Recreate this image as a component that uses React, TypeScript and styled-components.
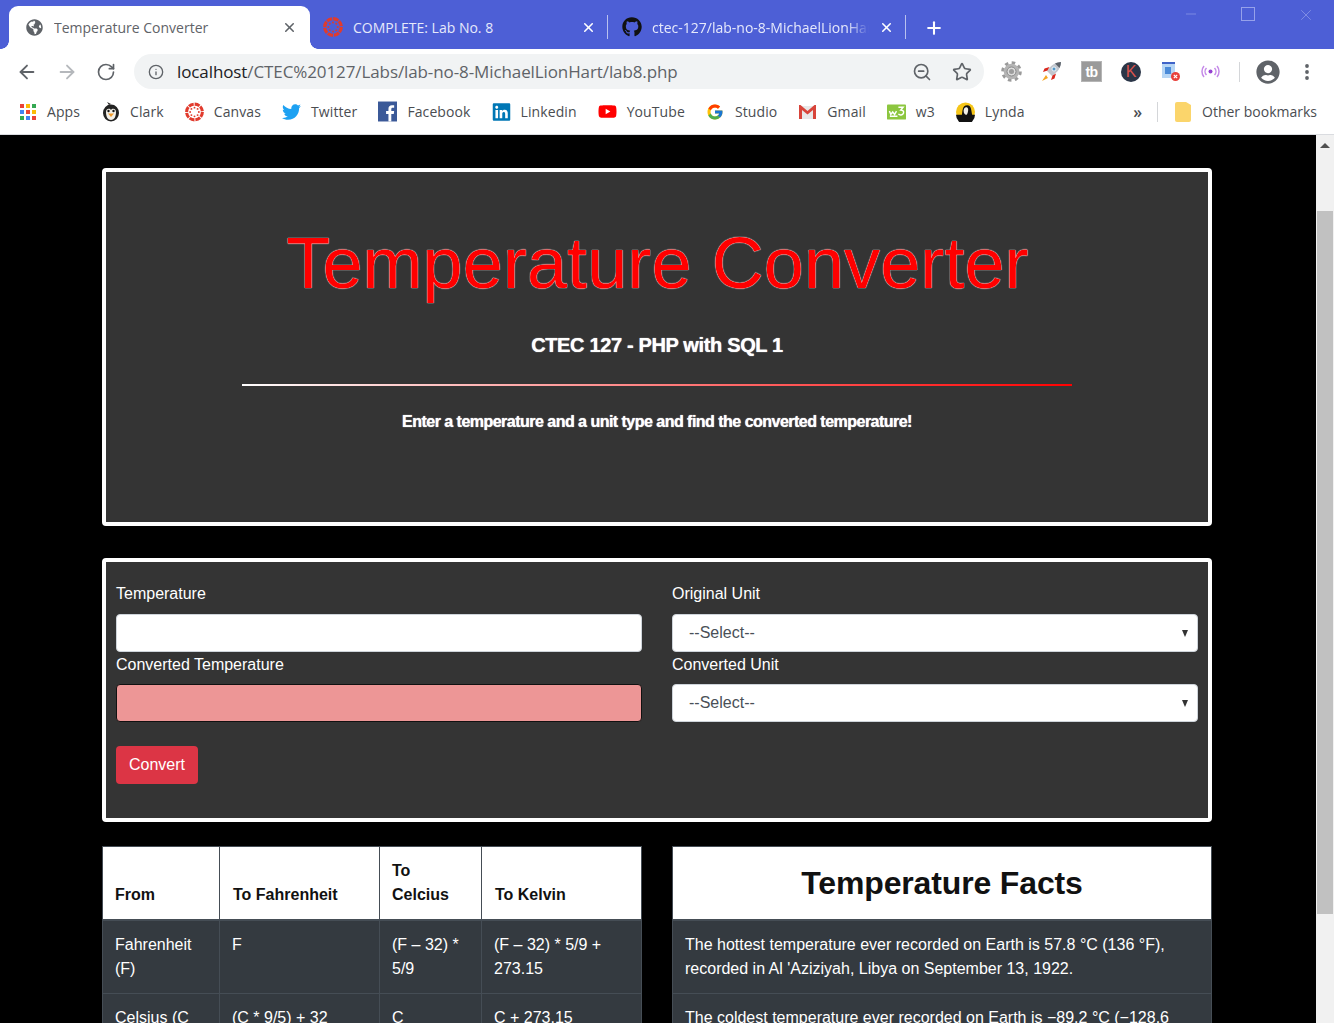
import styled, { createGlobalStyle } from "styled-components";
import { ArrowLeft, ArrowRight, RotateCw, Info, ZoomOut, Star, X, Plus, Minus } from "lucide-react";
import { FaGithub, FaGlobeAmericas, FaTwitter, FaLinkedin, FaYoutube, FaUserCircle } from "react-icons/fa";
import { FcGoogle } from "react-icons/fc";

const GlobalStyle = createGlobalStyle`
  html, body { margin: 0; padding: 0; background: #000; }
  * { box-sizing: border-box; }
  body { font-family: "Liberation Sans", Arial, sans-serif; overflow: hidden; }
`;

const Shell = styled.div`
  width: 1334px;
  height: 1023px;
  display: flex;
  flex-direction: column;
  overflow: hidden;
`;

const TabBar = styled.div`
  height: 49px;
  flex: none;
  background: #4d5fd6;
  display: flex;
  align-items: flex-end;
  padding-left: 9px;
  font-family: "Open Sans", sans-serif;
  font-size: 14px;
`;

const Tab = styled.div<{ $active?: boolean; $w: number; $sep?: boolean; $inset: number }>`
  width: ${(p) => p.$w}px;
  height: 43px;
  display: flex;
  align-items: center;
  padding: 0 ${(p) => (p.$active ? 13 : 12)}px 1px ${(p) => p.$inset}px;
  gap: 10px;
  border-radius: 9px 9px 0 0;
  background: ${(p) => (p.$active ? "#fff" : "transparent")};
  color: ${(p) => (p.$active ? "#5f6368" : "#e6e9fb")};
  position: relative;
  &::after {
    content: "";
    display: ${(p) => (p.$sep ? "block" : "none")};
    position: absolute;
    right: 0;
    top: 9px;
    height: 24px;
    width: 1px;
    background: #b9c1ef;
  }
`;

const TabFlare = styled.span<{ $side: "left" | "right" }>`
  position: absolute;
  bottom: 0;
  ${(p) => p.$side}: -8px;
  width: 8px;
  height: 8px;
  background: radial-gradient(
    circle at ${(p) => (p.$side === "left" ? "0 0" : "100% 0")},
    transparent 7.5px,
    #fff 8px
  );
`;

const TabTitle = styled.span<{ $fade?: boolean }>`
  flex: 1;
  white-space: nowrap;
  overflow: hidden;
  ${(p) => p.$fade && "mask-image: linear-gradient(90deg, #000 90%, transparent);"}
`;

const TabIcon = styled.span`
  width: 20px;
  height: 20px;
  flex: none;
  display: flex;
  align-items: center;
  justify-content: center;
`;

const NewTab = styled.div`
  margin-left: 18px;
  height: 43px;
  display: flex;
  align-items: center;
  color: #fff;
`;

const WindowControls = styled.div`
  margin-left: auto;
  align-self: flex-start;
  display: flex;
  color: #96a1ea;
  padding: 6px 19px 0 0;
  gap: 41px;
`;

const Toolbar = styled.div`
  height: 46px;
  flex: none;
  background: #fff;
  display: flex;
  align-items: center;
  padding: 0 16px 1px;
  color: #5f6368;
`;

const NavButtons = styled.div`
  display: flex;
  align-items: center;
  gap: 18px;
  width: 118px;
  flex: none;
`;

const Omnibox = styled.div`
  width: 850px;
  height: 35px;
  flex: none;
  border-radius: 18px;
  background: #f1f3f4;
  display: flex;
  align-items: center;
  padding: 0 12px 0 14px;
  font-family: "Open Sans", sans-serif;
  font-size: 17px;
  letter-spacing: -0.1px;
  color: #5f6368;
`;

const Url = styled.span`
  flex: 1;
  margin: 0 0 1px 13px;
  white-space: nowrap;
  & b {
    font-weight: 400;
    color: #202124;
  }
`;

const OmniActions = styled.div`
  display: flex;
  gap: 20px;
  align-items: center;
  color: #5f6368;
`;

const Extensions = styled.div`
  display: flex;
  align-items: center;
  margin-left: 17px;
  gap: 19px;
  flex: none;
`;

const ExtIcon = styled.span`
  width: 21px;
  height: 21px;
  display: flex;
  align-items: center;
  justify-content: center;
`;

const TbBadge = styled.span`
  width: 21px;
  height: 21px;
  background: #9a9a9a;
  border: 1px solid #b5b5b5;
  color: #fff;
  font-size: 14px;
  font-weight: 700;
  letter-spacing: -0.5px;
  display: flex;
  align-items: center;
  justify-content: center;
`;

const KBadge = styled.span`
  width: 20px;
  height: 20px;
  border-radius: 50%;
  background: #2a3547;
  color: #d9534c;
  font-size: 16px;
  display: flex;
  align-items: center;
  justify-content: center;
`;

const VSep = styled.span`
  width: 1px;
  height: 20px;
  background: #d4d6d9;
  flex: none;
`;

const ProfileGroup = styled.div`
  display: flex;
  align-items: center;
  gap: 16px;
  margin-left: -1px;
`;

const MenuDots = styled.svg`
  margin-left: 9px;
`;

const Bookmarks = styled.div`
  height: 40px;
  flex: none;
  background: #fff;
  border-bottom: 1px solid #dadce0;
  display: flex;
  align-items: center;
  padding: 0 17px 6px 18px;
  gap: 21px;
  font-family: "Open Sans", sans-serif;
  font-size: 14px;
  letter-spacing: 0.1px;
  color: #4a4d51;
`;

const Bookmark = styled.span`
  display: flex;
  align-items: center;
  gap: 10px;
  white-space: nowrap;
`;

const BmIcon = styled.span`
  width: 19px;
  height: 20px;
  display: flex;
  align-items: center;
  justify-content: center;
  flex: none;
`;

const BmEnd = styled.div`
  margin-left: auto;
  display: flex;
  align-items: center;
  gap: 15px;
  letter-spacing: 0;
`;

const Overflow = styled.span`
  font-size: 16px;
  font-weight: 600;
`;

const Viewport = styled.div`
  flex: 1;
  display: flex;
  min-height: 0;
`;

const Page = styled.main`
  flex: 1;
  background: #000;
  padding: 33px 104px 0 102px;
  overflow: hidden;
`;

const Scrollbar = styled.div`
  width: 18px;
  flex: none;
  background: #f1f1f1;
  display: flex;
  flex-direction: column;
  align-items: center;
`;

const ScrollArrow = styled.span`
  width: 0;
  height: 0;
  margin-top: 8px;
  border-left: 5px solid transparent;
  border-right: 5px solid transparent;
  border-bottom: 5px solid #505050;
`;

const ScrollThumb = styled.div`
  width: 16px;
  height: 703px;
  margin-top: 63px;
  background: #c1c1c1;
`;

const Panel = styled.section`
  background: #343434;
  border: 4px solid #fff;
  border-radius: 4px;
`;

const Hero = styled(Panel)`
  height: 358px;
  padding-top: 48px;
  text-align: center;
  color: #fff;
`;

const Title = styled.h1`
  margin: 0;
  padding-left: 1px;
  font-size: 72px;
  line-height: 86px;
  font-weight: 400;
  letter-spacing: 0.1px;
  color: #f00;
  text-shadow: 0 0 1px #fff, 0 0 1px #fff;
`;

const Subtitle = styled.h2`
  margin: 26px 0 0;
  font-size: 20px;
  line-height: 26px;
  font-weight: 700;
  letter-spacing: -0.35px;
  text-shadow: 0 0 1px #fff;
`;

const Rule = styled.hr`
  width: 830px;
  height: 2px;
  margin: 26px auto 0;
  border: 0;
  background: linear-gradient(90deg, #fff, #f00);
`;

const Lead = styled.p`
  margin: 25px 0 0;
  font-size: 16px;
  line-height: 22px;
  font-weight: 700;
  letter-spacing: -0.52px;
  text-shadow: 0 0 1px #fff;
`;

const FormPanel = styled(Panel)`
  margin-top: 32px;
  height: 264px;
  padding: 20px 10px 0;
  color: #fff;
`;

const FormGrid = styled.div`
  display: grid;
  grid-template-columns: 526px 526px;
  column-gap: 30px;
`;

const Field = styled.div`
  display: flex;
  flex-direction: column;
`;

const Label = styled.label<{ $lower?: boolean }>`
  font-size: 16px;
  line-height: 24px;
  padding-top: ${(p) => (p.$lower ? 1 : 0)}px;
  margin-bottom: ${(p) => (p.$lower ? 7 : 8)}px;
`;

const TextInput = styled.input<{ $result?: boolean }>`
  height: 38px;
  width: 100%;
  border-radius: 4px;
  border: 1px solid ${(p) => (p.$result ? "#111" : "#ced4da")};
  background: ${(p) => (p.$result ? "#ed9696" : "#fff")};
  display: block;
`;

const SelectWrap = styled.div`
  position: relative;
  height: 38px;
  &::after {
    content: "";
    position: absolute;
    right: 10px;
    top: 16px;
    border-left: 3.5px solid transparent;
    border-right: 3.5px solid transparent;
    border-top: 7px solid #333;
  }
`;

const Select = styled.select`
  appearance: none;
  width: 100%;
  height: 38px;
  border-radius: 4px;
  border: 1px solid #ced4da;
  background: #fff;
  color: #495057;
  font-family: inherit;
  font-size: 16px;
  padding: 0 16px 2px;
`;

const ConvertButton = styled.button`
  display: block;
  margin-top: 24px;
  width: 82px;
  height: 38px;
  border: 0;
  border-radius: 4px;
  background: #dc3545;
  color: #fff;
  font-family: inherit;
  font-size: 16px;
`;

const LowerGrid = styled.div`
  margin-top: 24px;
  display: grid;
  grid-template-columns: 539px 540px;
  column-gap: 31px;
  align-items: start;
`;

const Table = styled.table`
  width: 100%;
  table-layout: fixed;
  border-collapse: collapse;
  font-size: 16px;
  line-height: 24px;
  color: #fff;
  background: #343a40;
  & th, & td {
    border: 1px solid #454d55;
    padding: 12px;
    text-align: left;
  }
  & thead th {
    background: #fff;
    color: #111;
    vertical-align: bottom;
    border-bottom-width: 2px;
    font-weight: 700;
  }
  & thead th:nth-child(2), & thead th:nth-child(4) {
    padding-left: 13px;
  }
  & td {
    vertical-align: top;
    white-space: pre-line;
  }
`;

const FactHead = styled.th`
  font-size: 32px;
  line-height: 38px;
  height: 73px;
  letter-spacing: -0.15px;
  && {
    text-align: center;
    vertical-align: middle;
    padding-top: 12px;
  }
`;

function CanvasIcon({ size = 20 }: { size?: number }) {
  const spokes = Array.from({ length: 8 }, (_, i) => (i * Math.PI) / 4);
  return (
    <svg width={size} height={size} viewBox="0 0 20 20" fill="#e13b2d">
      <circle cx="10" cy="10" r="8.3" fill="none" stroke="#e13b2d" strokeWidth="3.2" strokeDasharray="5.500 1" />
      {spokes.map((a) => (
        <circle key={a} cx={10 + 4.6 * Math.cos(a)} cy={10 + 4.6 * Math.sin(a)} r="1" />
      ))}
    </svg>
  );
}

function AppsIcon() {
  const colors = ["#ea4335", "#fbbc05", "#34a853", "#4285f4", "#ea4335", "#fbbc05", "#34a853", "#4285f4", "#ea4335"];
  return (
    <svg width="18" height="18" viewBox="0 0 18 18">
      {colors.map((c, i) => (
        <rect key={i} x={1 + (i % 3) * 6} y={1 + Math.floor(i / 3) * 6} width="4" height="4" fill={c} />
      ))}
    </svg>
  );
}

function PenguinIcon() {
  return (
    <svg width="18" height="20" viewBox="0 0 18 20">
      <path d="M7 3L5 0l4 2z" fill="#222" />
      <ellipse cx="9" cy="11" rx="8" ry="8.500" fill="#222" />
      <path d="M9 8c-1-2-5-2-5 2 0 5 2 8 5 8s5-3 5-8c0-4-4-4-5-2z" fill="#f3f0e8" />
      <circle cx="6.500" cy="9" r="1.200" fill="#111" />
      <circle cx="11.500" cy="9" r="1.200" fill="#111" />
      <path d="M6 11.500h6l-3 3.500z" fill="#f09a2a" />
    </svg>
  );
}

function GearIcon() {
  return (
    <svg width="21" height="21" viewBox="0 0 21 21">
      <circle cx="10.500" cy="10.500" r="8.800" fill="none" stroke="#9a9a9a" strokeWidth="3" strokeDasharray="3.500 3.400" />
      <circle cx="10.500" cy="10.500" r="7.800" fill="#b4b4b4" />
      <circle cx="10.500" cy="10.500" r="4.500" fill="#dcdcdc" stroke="#8a8a8a" />
      <circle cx="10.500" cy="10.500" r="2.500" fill="#9c9c9c" />
    </svg>
  );
}

function RocketIcon() {
  return (
    <svg width="21" height="21" viewBox="0 0 21 21">
      <path d="M5 14l-4 6 6-3z" fill="#f5a623" />
      <path d="M20 1c-5 0-10 3-14 9l5 5c6-4 9-9 9-14z" fill="#c2c6cd" />
      <path d="M20 1c-2 0-4 .5-6 1.500L18.500 7C19.500 5 20 3 20 1z" fill="#5d636b" />
      <circle cx="13" cy="8" r="2" fill="#4f96c8" stroke="#fff" strokeWidth="0.8" />
      <path d="M6.500 9.500L2 11l1.500-3.500 5-1.500zM11.500 14.500L10 19l3.500-1.500 1.500-5z" fill="#d9281e" />
    </svg>
  );
}

function FacebookIcon() {
  return (
    <svg width="20" height="21" viewBox="0 0 20 21">
      <rect width="20" height="21" fill="#3b5998" />
      <path d="M14 21v-8h2.600l.4-3h-3V8c0-.9.300-1.500 1.500-1.500H17V4c-.5 0-1.300-.1-2.300-.1C12.400 3.900 11 5.200 11 7.700V10H8.500v3H11v8z" fill="#fff" />
    </svg>
  );
}

function GmailIcon() {
  return (
    <svg width="19" height="16" viewBox="0 0 19 16">
      <path d="M1 2h17v13H1z" fill="#e8e8e8" />
      <path d="M1 1h1.500l7 6 7-6H18v14h-3V6l-5.500 4.500L4 6v9H1z" fill="#d8443a" />
    </svg>
  );
}

function W3Icon() {
  return (
    <svg width="20" height="16" viewBox="0 0 20 16">
      <rect width="20" height="16" rx="1" fill="#8cc63f" />
      <path d="M2.500 7l1.500 3.500L6 8l2 2.500L10 7M12 3h5l-2.500 3c2.500 0 3.500 1.500 2.800 3.300-.8 2-3.800 2.500-5.300.7M3 12.500h8" fill="none" stroke="#fff" strokeWidth="1.500" />
    </svg>
  );
}

function LyndaIcon() {
  return (
    <svg width="20" height="20" viewBox="0 0 20 20">
      <circle cx="10" cy="10" r="10" fill="#f5c518" />
      <path d="M0 13h20a10 10 0 0 1-20 0z" fill="#111" />
      <path d="M6 15c1-5 0-12 6-12 4 0 4 5 5 10l-3 2z" fill="#111" />
      <path d="M8 9c0-3 1.500-4.500 3.500-4 1.500.5 1.500 3 1 5s-1 3-2 3-2.500-1.500-2.500-4z" fill="#f3f0e8" />
    </svg>
  );
}

function FolderIcon() {
  return (
    <svg width="16" height="20" viewBox="0 0 16 20">
      <path d="M0 2a2 2 0 0 1 2-2h9l5 3v15a2 2 0 0 1-2 2H2a2 2 0 0 1-2-2z" fill="#fbd56b" />
    </svg>
  );
}

function PageRulesIcon() {
  return (
    <svg width="21" height="21" viewBox="0 0 21 21">
      <rect x="2" y="1" width="13" height="16" fill="#b7d6f5" />
      <rect x="2" y="1" width="13" height="2" fill="#3f63c8" />
      <rect x="5" y="6" width="6" height="7" fill="#4a8ad8" />
      <circle cx="15.500" cy="15.500" r="4.500" fill="#e8403a" />
      <path d="M13.800 13.800l3.400 3.400m0-3.400l-3.400 3.400" stroke="#fff" strokeWidth="1.200" />
    </svg>
  );
}

function BroadcastIcon() {
  return (
    <svg width="21" height="21" viewBox="0 0 21 21" fill="none" stroke="#c58ae8" strokeWidth="1.500">
      <circle cx="10.500" cy="10.500" r="2" fill="#9440d0" stroke="none" />
      <path d="M6.500 7a5 5 0 0 0 0 7M14.500 7a5 5 0 0 1 0 7M4 5a8.500 8.500 0 0 0 0 11M17 5a8.500 8.500 0 0 1 0 11" />
    </svg>
  );
}

const BOOKMARKS = [
  { label: "Apps", icon: <AppsIcon /> },
  { label: "Clark", icon: <PenguinIcon /> },
  { label: "Canvas", icon: <CanvasIcon /> },
  { label: "Twitter", icon: <FaTwitter size={20} color="#1da1f2" /> },
  { label: "Facebook", icon: <FacebookIcon /> },
  { label: "Linkedin", icon: <FaLinkedin size={20} color="#0077b5" /> },
  { label: "YouTube", icon: <FaYoutube size={21} color="#f00" /> },
  { label: "Studio", icon: <FcGoogle size={18} /> },
  { label: "Gmail", icon: <GmailIcon /> },
  { label: "w3", icon: <W3Icon /> },
  { label: "Lynda", icon: <LyndaIcon /> },
];

const ROWS = [
  ["Fahrenheit (F)", "F", "(F – 32) * 5/9", "(F – 32) * 5/9 + 273.15"],
  ["Celsius (C\n)", "(C * 9/5) + 32", "C", "C + 273.15"],
];

const FACTS = [
  "The hottest temperature ever recorded on Earth is 57.8 °C (136 °F), recorded in Al 'Aziziyah, Libya on September 13, 1922.",
  "The coldest temperature ever recorded on Earth is −89.2 °C (−128.6 °F), recorded at Vostok Station, Antarctica.",
];

export default function App() {
  return (
    <Shell>
      <GlobalStyle />
      <TabBar>
        <Tab $active $w={301} $inset={15}>
          <TabFlare $side="left" />
          <TabIcon>
            <FaGlobeAmericas size={17} color="#5f6368" />
          </TabIcon>
          <TabTitle>Temperature Converter</TabTitle>
          <X size={15} strokeWidth={2.5} />
          <TabFlare $side="right" />
        </Tab>
        <Tab $w={298} $sep $inset={13}>
          <TabIcon>
            <CanvasIcon />
          </TabIcon>
          <TabTitle>COMPLETE: Lab No. 8</TabTitle>
          <X size={15} strokeWidth={2.5} color="#fff" />
        </Tab>
        <Tab $w={298} $sep $inset={14}>
          <TabIcon>
            <FaGithub size={20} color="#111" />
          </TabIcon>
          <TabTitle $fade>ctec-127/lab-no-8-MichaelLionHart</TabTitle>
          <X size={15} strokeWidth={2.5} color="#fff" />
        </Tab>
        <NewTab>
          <Plus size={20} strokeWidth={2.5} />
        </NewTab>
        <WindowControls>
          <Minus size={16} strokeWidth={1} />
          <svg width="16" height="16" viewBox="0 0 16 16" fill="none" stroke="currentColor">
            <rect x="1.500" y="1.500" width="13" height="13" />
          </svg>
          <X size={18} strokeWidth={0.9} />
        </WindowControls>
      </TabBar>

      <Toolbar>
        <NavButtons>
          <ArrowLeft size={22} />
          <ArrowRight size={22} color="#b5b8bc" />
          <RotateCw size={20} />
        </NavButtons>
        <Omnibox>
          <Info size={16} />
          <Url>
            <b>localhost</b>/CTEC%20127/Labs/lab-no-8-MichaelLionHart/lab8.php
          </Url>
          <OmniActions>
            <ZoomOut size={20} />
            <Star size={20} />
          </OmniActions>
        </Omnibox>
        <Extensions>
          <ExtIcon>
            <GearIcon />
          </ExtIcon>
          <ExtIcon>
            <RocketIcon />
          </ExtIcon>
          <TbBadge>tb</TbBadge>
          <KBadge>K</KBadge>
          <PageRulesIcon />
          <BroadcastIcon />
          <ProfileGroup>
            <VSep />
            <FaUserCircle size={24} color="#5f6368" />
            <MenuDots width="4" height="16" viewBox="0 0 4 16" fill="#5f6368">
              <circle cx="2" cy="2" r="1.900" />
              <circle cx="2" cy="8" r="1.900" />
              <circle cx="2" cy="14" r="1.900" />
            </MenuDots>
          </ProfileGroup>
        </Extensions>
      </Toolbar>

      <Bookmarks>
        {BOOKMARKS.map((b) => (
          <Bookmark key={b.label}>
            <BmIcon>{b.icon}</BmIcon>
            {b.label}
          </Bookmark>
        ))}
        <BmEnd>
          <Overflow>»</Overflow>
          <VSep />
          <Bookmark>
            <BmIcon>
              <FolderIcon />
            </BmIcon>
            Other bookmarks
          </Bookmark>
        </BmEnd>
      </Bookmarks>

      <Viewport>
        <Page>
          <Hero>
            <Title>Temperature Converter</Title>
            <Subtitle>CTEC 127 - PHP with SQL 1</Subtitle>
            <Rule />
            <Lead>Enter a temperature and a unit type and find the converted temperature!</Lead>
          </Hero>

          <FormPanel>
            <FormGrid>
              <Field>
                <Label>Temperature</Label>
                <TextInput />
              </Field>
              <Field>
                <Label>Original Unit</Label>
                <SelectWrap>
                  <Select>
                    <option>--Select--</option>
                  </Select>
                </SelectWrap>
              </Field>
              <Field>
                <Label $lower>Converted Temperature</Label>
                <TextInput $result readOnly />
              </Field>
              <Field>
                <Label $lower>Converted Unit</Label>
                <SelectWrap>
                  <Select>
                    <option>--Select--</option>
                  </Select>
                </SelectWrap>
              </Field>
            </FormGrid>
            <ConvertButton>Convert</ConvertButton>
          </FormPanel>

          <LowerGrid>
            <Table>
              <colgroup>
                <col style={{ width: 117 }} />
                <col style={{ width: 160 }} />
                <col style={{ width: 102 }} />
                <col style={{ width: 160 }} />
              </colgroup>
              <thead>
                <tr>
                  <th>From</th>
                  <th>To Fahrenheit</th>
                  <th>
                    To
                    <br />
                    Celcius
                  </th>
                  <th>To Kelvin</th>
                </tr>
              </thead>
              <tbody>
                {ROWS.map((row) => (
                  <tr key={row[0]}>
                    {row.map((cell) => (
                      <td key={cell}>{cell}</td>
                    ))}
                  </tr>
                ))}
              </tbody>
            </Table>
            <Table>
              <thead>
                <tr>
                  <FactHead>Temperature Facts</FactHead>
                </tr>
              </thead>
              <tbody>
                {FACTS.map((fact) => (
                  <tr key={fact}>
                    <td>{fact}</td>
                  </tr>
                ))}
              </tbody>
            </Table>
          </LowerGrid>
        </Page>
        <Scrollbar>
          <ScrollArrow />
          <ScrollThumb />
        </Scrollbar>
      </Viewport>
    </Shell>
  );
}
